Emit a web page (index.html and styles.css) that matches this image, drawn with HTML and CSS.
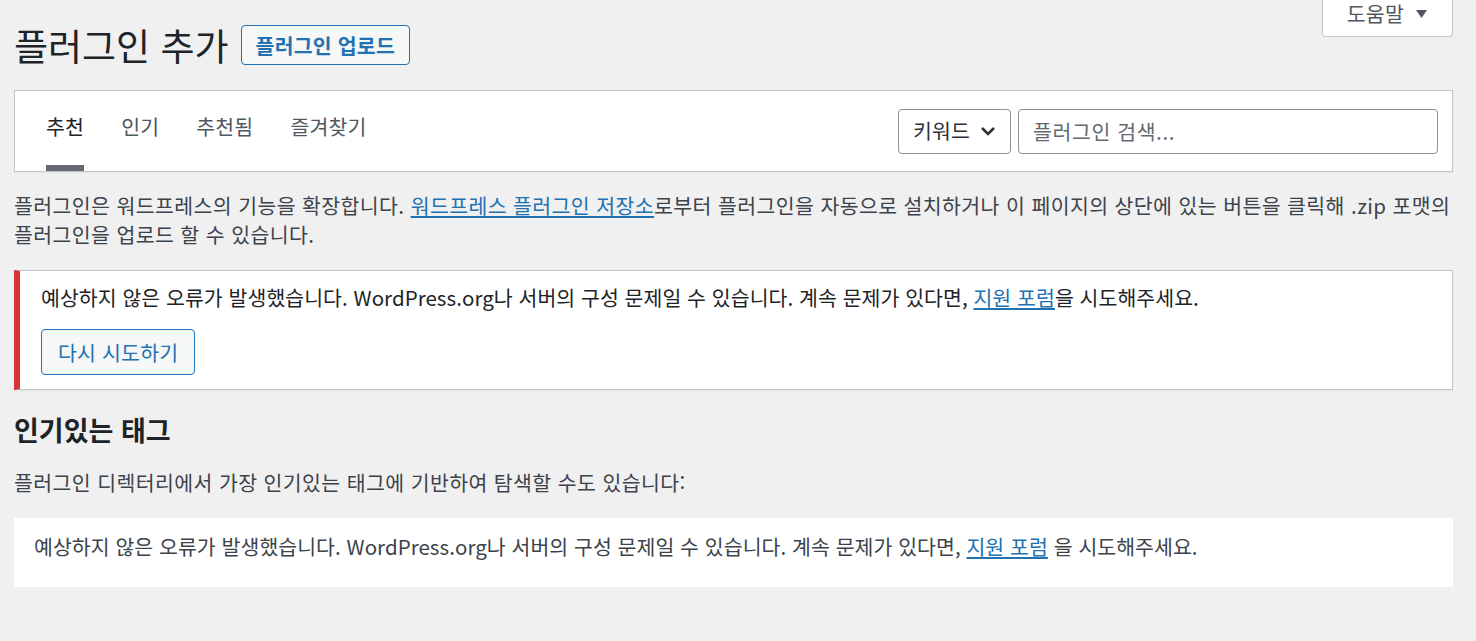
FILE: index.html
```html
<!DOCTYPE html>
<html lang="ko">

<head>
    <meta charset="UTF-8">
    <meta name="viewport" content="width=device-width, initial-scale=1.0">
    <title>플러그인 추가</title>
    <link rel="stylesheet" href="styles.css">
</head>

<body>
    <div class="wrap">
        <!-- help tab at the top right -->
        <div class="help-tab">
            <span>도움말</span>
            <svg class="help-arrow" width="11" height="8" viewBox="0 0 11 8"><path d="M0 0 H11 L5.5 8 Z" fill="#50575e"/></svg>
        </div>

        <div class="title-row">
            <h1>플러그인 추가</h1>
            <a class="upload-button" href="#">플러그인 업로드</a>
        </div>

        <div class="filter">
            <ul class="tabs">
                <li><a class="current" href="#">추천</a></li>
                <li><a href="#">인기</a></li>
                <li><a href="#">추천됨</a></li>
                <li><a href="#">즐겨찾기</a></li>
            </ul>
            <div class="search">
                <div class="select">
                    <span>키워드</span>
                    <svg width="16" height="10" viewBox="0 0 16 10"><path d="M2 2 L8 8 L14 2" fill="none" stroke="#2c3338" stroke-width="2.6"/></svg>
                </div>
                <div class="search-input">플러그인 검색...</div>
            </div>
        </div>

        <p class="intro">플러그인은 워드프레스의 기능을 확장합니다. <a href="#">워드프레스 플러그인 저장소</a>로부터 플러그인을 자동으로 설치하거나 이 페이지의 상단에 있는 버튼을 클릭해 .zip 포맷의 플러그인을 업로드 할 수 있습니다.</p>

        <div class="notice">
            <p>예상하지 않은 오류가 발생했습니다. WordPress.org나 서버의 구성 문제일 수 있습니다. 계속 문제가 있다면, <a href="#">지원 포럼</a>을 시도해주세요.</p>
            <button class="retry">다시 시도하기</button>
        </div>

        <h2>인기있는 태그</h2>
        <p class="tags-intro">플러그인 디렉터리에서 가장 인기있는 태그에 기반하여 탐색할 수도 있습니다:</p>

        <div class="tag-box">
            예상하지 않은 오류가 발생했습니다. WordPress.org나 서버의 구성 문제일 수 있습니다. 계속 문제가 있다면, <a href="#">지원 포럼</a> 을 시도해주세요.
        </div>
    </div>
</body>

</html>
```

FILE: styles.css
```css
body {
    margin: 0;
    background-color: #f0f0f1;
    font-family: "Noto Sans CJK KR", sans-serif;
    font-size: 20.5px;
    letter-spacing: 0.4px;
    line-height: 29.25px;
    color: #3c434a;
    word-break: keep-all;
}

a {
    color: #2271b1;
}

.wrap {
    padding: 0 23px 0 14px;
}

/* help tab */
.help-tab {
    float: right;
    display: flex;
    align-items: center;
    gap: 12px;
    height: 27px;
    padding: 0 25px 9px 24px;
    background-color: #fff;
    border: 1px solid #c3c4c7;
    border-top: none;
    border-radius: 0 0 4px 4px;
    letter-spacing: 0.2px;
    line-height: 27px;
    color: #50575e;
}

.help-arrow {
    margin-top: 1px;
}

/* page title */
.title-row {
    display: flex;
    align-items: center;
    gap: 12px;
    padding-top: 25px;
}

.title-row h1 {
    margin: 0;
    font-size: 37px;
    font-weight: 400;
    letter-spacing: 0;
    line-height: 40px;
    color: #1d2327;
}

.upload-button {
    height: 38px;
    padding: 0 14px;
    border: 1px solid #2271b1;
    border-radius: 4px;
    background-color: #f6f7f7;
    font-weight: 600;
    letter-spacing: 0.2px;
    line-height: 38px;
    text-decoration: none;
}

/* filter bar */
.filter {
    display: flex;
    justify-content: space-between;
    align-items: center;
    margin-top: 25px;
    height: 80px;
    padding: 0 14px 0 31px;
    background-color: #fff;
    border: 1px solid #c3c4c7;
    box-shadow: 0 1px 1px rgba(0, 0, 0, 0.04);
}

.tabs {
    display: flex;
    gap: 37px;
    margin: 0;
    padding: 0;
    list-style: none;
    align-self: stretch;
}

.tabs a {
    display: block;
    padding: 20px 0 24px;
    letter-spacing: 0.2px;
    line-height: 30px;
    border-bottom: 6px solid transparent;
    color: #50575e;
    text-decoration: none;
}

.tabs a.current {
    color: #1d2327;
    border-bottom-color: #646970;
}

.search {
    display: flex;
    gap: 7px;
}

.select {
    display: flex;
    align-items: center;
    gap: 10px;
    box-sizing: border-box;
    width: 113px;
    height: 45px;
    padding: 0 0 0 14px;
    border: 1px solid #8c8f94;
    border-radius: 4px;
    letter-spacing: 0.2px;
    color: #2c3338;
}

.search-input {
    box-sizing: border-box;
    width: 420px;
    height: 45px;
    padding: 0 14px;
    border: 1px solid #8c8f94;
    border-radius: 4px;
    letter-spacing: 0.6px;
    line-height: 43px;
    color: #646970;
}

.intro {
    margin: 19px 0 0;
}

/* error notice */
.notice {
    margin-top: 20px;
    padding: 0 21px 14px;
    background-color: #fff;
    border: 1px solid #c3c4c7;
    border-left: 6px solid #d63638;
    box-shadow: 0 1px 1px rgba(0, 0, 0, 0.04);
}

.notice p {
    margin: 12px 0 17.5px;
    letter-spacing: 0.05px;
    color: #1d2327;
}

.retry {
    height: 46px;
    padding: 0 16px;
    border: 1px solid #2271b1;
    border-radius: 4px;
    background-color: #f6f7f7;
    font-family: inherit;
    font-size: 20.5px;
    letter-spacing: 0.2px;
    color: #2271b1;
}

h2 {
    margin: 22px 0 0;
    font-size: 27px;
    letter-spacing: 0;
    line-height: 35px;
    font-weight: 700;
    color: #1d2327;
}

.tags-intro {
    margin: 21px 0 0;
}

.tag-box {
    margin-top: 20px;
    padding: 14px 20px 26px;
    background-color: #fff;
    letter-spacing: 0.05px;
    box-shadow: 0 1px 1px rgba(0, 0, 0, 0.04);
}
```
